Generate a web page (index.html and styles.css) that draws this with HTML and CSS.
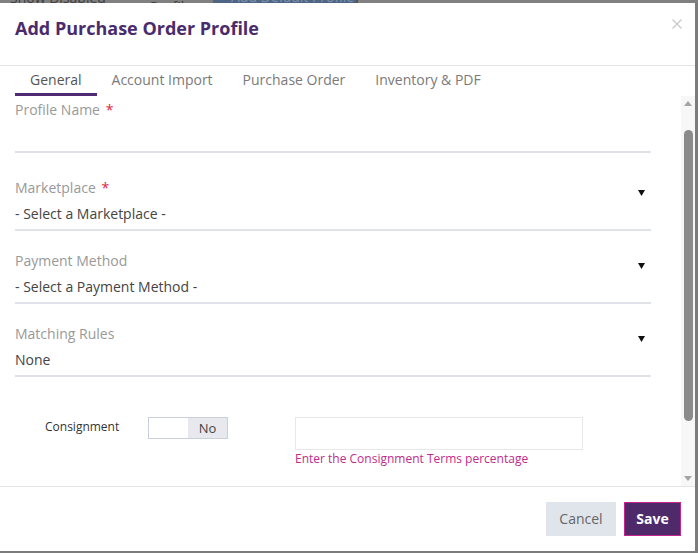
FILE: index.html
```html
<!DOCTYPE html>
<html>
<head>
<meta charset="utf-8">
<link rel="stylesheet" href="styles.css">
</head>
<body>
<div class="backdrop-strip">
  <div class="bg-inner">
    <span class="bg-text bg-check">Show Disabled</span>
    <span class="bg-text bg-add">+Add Profile</span>
    <span class="bg-btn">Add Default Profile</span>
  </div>
</div>
<div class="modal">
  <div class="modal-header">
    <h1 class="modal-title">Add Purchase Order Profile</h1>
    <span class="close">
      <svg width="10" height="10" viewBox="0 0 10 10"><path d="M0.5 0.5 L9.5 9.5 M9.5 0.5 L0.5 9.5" stroke="#c9c9c9" stroke-width="1.3" fill="none"/></svg>
    </span>
  </div>
  <div class="tabs">
    <span class="tab active">General</span>
    <span class="tab">Account Import</span>
    <span class="tab">Purchase Order</span>
    <span class="tab">Inventory &amp; PDF</span>
  </div>
  <div class="modal-body">
    <div class="form">
      <div class="field first">
        <div class="label">Profile Name <span class="req">*</span></div>
        <div class="input"></div>
      </div>
      <div class="field select">
        <div class="label">Marketplace <span class="req">*</span></div>
        <div class="input">- Select a Marketplace -</div>
        <svg class="caret" width="7" height="6" viewBox="0 0 7 6"><path d="M0 0 H7 L3.5 6 Z" fill="#111"/></svg>
      </div>
      <div class="field select">
        <div class="label">Payment Method</div>
        <div class="input">- Select a Payment Method -</div>
        <svg class="caret" width="7" height="6" viewBox="0 0 7 6"><path d="M0 0 H7 L3.5 6 Z" fill="#111"/></svg>
      </div>
      <div class="field select">
        <div class="label">Matching Rules</div>
        <div class="input">None</div>
        <svg class="caret" width="7" height="6" viewBox="0 0 7 6"><path d="M0 0 H7 L3.5 6 Z" fill="#111"/></svg>
      </div>
      <div class="consign-row">
        <div class="consign-label">Consignment</div>
        <div class="toggle">
          <span class="toggle-off"></span>
          <span class="toggle-no">No</span>
        </div>
        <div class="terms">
          <div class="terms-input"></div>
          <div class="terms-help">Enter the Consignment Terms percentage</div>
        </div>
      </div>
    </div>
    <div class="scrollbar">
      <svg class="sb-arrow" width="8" height="5" viewBox="0 0 8 5"><path d="M0 5 H8 L4 0 Z" fill="#a3a3a3"/></svg>
      <div class="sb-track">
        <div class="sb-thumb"></div>
      </div>
      <svg class="sb-arrow" width="8" height="5" viewBox="0 0 8 5"><path d="M0 0 H8 L4 5 Z" fill="#a3a3a3"/></svg>
    </div>
  </div>
  <div class="modal-footer">
    <button class="btn btn-cancel">Cancel</button>
    <button class="btn btn-save">Save</button>
  </div>
</div>
</body>
</html>
```

FILE: styles.css
```css
* { box-sizing: border-box; }
html, body {
  margin: 0;
  padding: 0;
  width: 698px;
  height: 553px;
  overflow: hidden;
  background: #7c7c7c;
  font-family: "Open Sans", "Liberation Sans", sans-serif;
}
.backdrop-strip {
  height: 3px;
  overflow: hidden;
  background: #808080;
}
.bg-inner {
  display: flex;
  align-items: center;
  height: 20px;
  margin-top: -13px;
  font-size: 14px;
  color: #3e3e3e;
}
.bg-check { margin-left: 10px; width: 140px; }
.bg-add { width: 63px; }
.bg-btn {
  display: block;
  width: 145px;
  height: 20px;
  background: #4f6585;
  color: #8090a8;
  padding-left: 18px;
  border-right: 2px solid #555;
}
.modal {
  width: 695px;
  height: 548px;
  background: #fff;
  display: flex;
  flex-direction: column;
}
.modal-header {
  height: 63px;
  border-bottom: 1px solid #e5e5e5;
  padding: 13px 13px 0 15px;
  display: flex;
  justify-content: space-between;
  align-items: flex-start;
}
.modal-title {
  margin: 0;
  font-size: 18px;
  line-height: 25px;
  font-weight: 700;
  color: #4a2b6d;
}
.close {
  display: block;
  margin-top: 3px;
  width: 10px;
  height: 10px;
  line-height: 0;
}
.tabs {
  height: 30px;
  display: flex;
  padding-left: 15px;
}
.tab {
  display: block;
  padding: 4px 15px 0;
  font-size: 14px;
  line-height: 20px;
  color: #7a7a7a;
  border-bottom: 3px solid transparent;
}
.tab.active {
  color: #555;
  border-bottom-color: #4f2a72;
}
.modal-body {
  height: 390px;
  display: flex;
}
.form {
  flex: 1;
  padding: 4px 30px 0 15px;
  overflow: hidden;
}
.field {
  position: relative;
  margin-bottom: 20px;
}
.field.first { margin-bottom: 25px; }
.label {
  font-size: 14px;
  line-height: 20px;
  color: #999;
}
.req { color: #e2233f; margin-left: 2px; }
.input {
  height: 33px;
  border-bottom: 2px solid #dfe2e8;
  font-size: 14px;
  line-height: 20px;
  padding-top: 6px;
  color: #444;
}
.caret {
  position: absolute;
  right: 6px;
  top: 12px;
}
.consign-row {
  display: flex;
  align-items: flex-start;
  margin-top: 40px;
  padding-left: 30px;
}
.consign-label {
  width: 103px;
  font-size: 12px;
  line-height: 20px;
  color: #333;
}
.toggle {
  display: flex;
  width: 80px;
  height: 22px;
  border: 1px solid #c9cfdb;
}
.toggle-off {
  width: 39px;
  background: #fff;
}
.toggle-no {
  flex: 1;
  background: #e8e9ee;
  font-size: 13px;
  line-height: 20px;
  color: #444;
  text-align: center;
}
.terms {
  margin-left: 67px;
  width: 288px;
}
.terms-input {
  height: 33px;
  border: 1px solid #e8e8e8;
}
.terms-help {
  margin-top: 1px;
  font-size: 12px;
  line-height: 16px;
  color: #c22a8b;
}
.scrollbar {
  width: 14px;
  background: #f7f7f7;
  display: flex;
  flex-direction: column;
  align-items: center;
}
.sb-arrow {
  display: block;
  margin: 5px 0;
  flex: none;
}
.sb-track {
  flex: 1;
  width: 100%;
  padding: 19px 0 0 3px;
}
.sb-thumb {
  width: 9px;
  height: 291px;
  border-radius: 5px;
  background: #8b8b8b;
}
.modal-footer {
  height: 65px;
  border-top: 1px solid #e5e5e5;
  display: flex;
  justify-content: flex-end;
  align-items: flex-start;
  padding: 15px 14px 0 0;
  gap: 8px;
}
.btn {
  height: 34px;
  font-family: "Open Sans", "Liberation Sans", sans-serif;
  font-size: 14px;
  border: 1px solid transparent;
  padding: 0 0 2px;
  margin: 0;
}
.btn-cancel {
  width: 70px;
  background: #e0e5ec;
  color: #666;
}
.btn-save {
  width: 57px;
  background: #4e2a6b;
  border-color: #c3258a;
  color: #fff;
  font-weight: 700;
}
```
